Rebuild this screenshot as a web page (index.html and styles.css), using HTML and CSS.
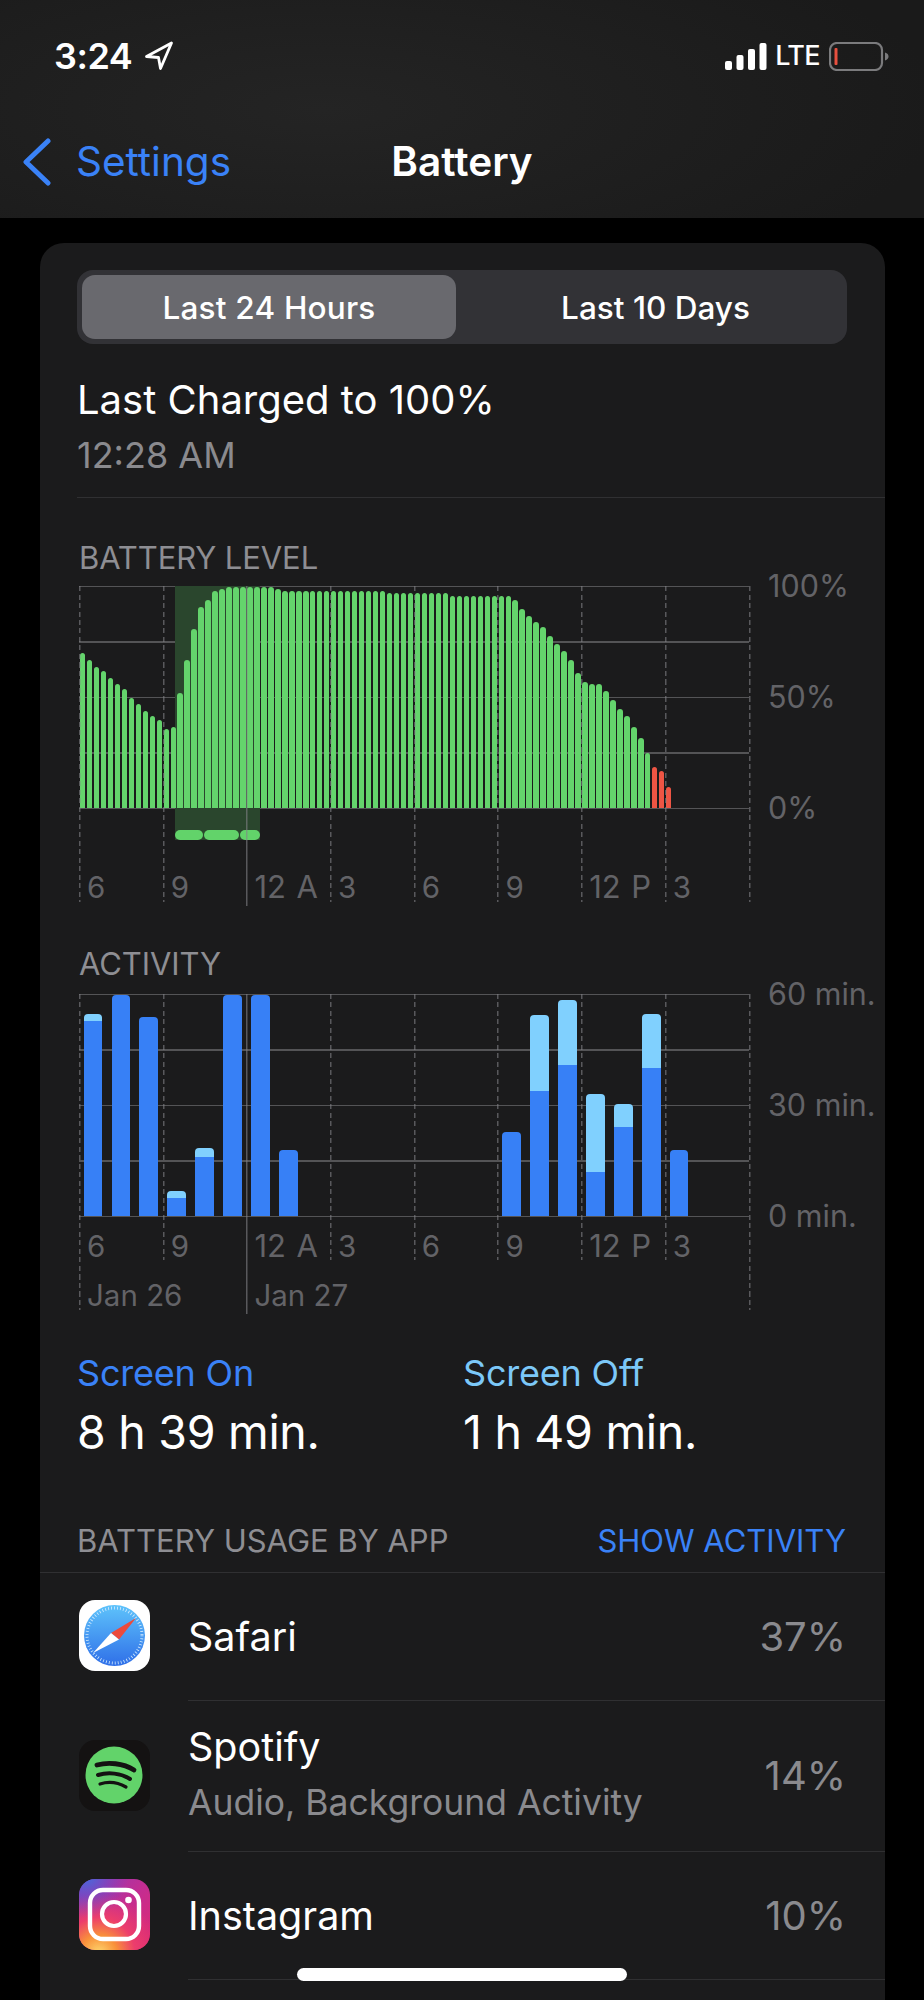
FILE: index.html
```html
<!DOCTYPE html>
<html lang="en">
<head>
<meta charset="utf-8">
<title>Battery</title>
<link rel="stylesheet" href="styles.css">
</head>
<body>
<div class="page">
  <header class="topbar">
    <div class="status">
      <div class="status-left">
        <span class="clock">3:24</span>
        <svg class="loc" viewBox="0 0 30 30" width="30" height="30"><path d="M27.500 2 2.500 15.500 14.500 16.500 16.500 27.500Z" fill="none" stroke="#fff" stroke-width="2.800" stroke-linejoin="round"/></svg>
      </div>
      <div class="status-right">
        <svg class="signal" viewBox="0 0 42 27" width="42" height="27"><rect x="0" y="18" width="7" height="9" rx="2" fill="#fff"/><rect x="11.500" y="12" width="7" height="15" rx="2" fill="#fff"/><rect x="23" y="6" width="7" height="21" rx="2" fill="#fff"/><rect x="34.500" y="0" width="7" height="27" rx="2" fill="#fff"/></svg>
        <span class="lte">LTE</span>
        <svg class="batt" viewBox="0 0 60 29" width="60" height="29"><rect x="1" y="1" width="52" height="27" rx="7" fill="none" stroke="#7b7b7d" stroke-width="2.200"/><rect x="5.500" y="6" width="3" height="17" rx="1" fill="#e8503f"/><path d="M56 10.500c2.500.8 3.500 2.200 3.500 4s-1 3.200-3.500 4Z" fill="#7b7b7d"/></svg>
      </div>
    </div>
    <nav class="navbar">
      <div class="back">
        <svg class="chevron" viewBox="0 0 30 48" width="30" height="48"><path d="M26 3 4 24 26 45" fill="none" stroke="#3a82f7" stroke-width="5" stroke-linecap="round" stroke-linejoin="round"/></svg>
        <span class="back-label">Settings</span>
      </div>
      <h1 class="title">Battery</h1>
    </nav>
  </header>

  <main class="card">
    <div class="segmented">
      <div class="seg seg-on">Last 24 Hours</div>
      <div class="seg seg-off">Last 10 Days</div>
    </div>

    <div class="charged">Last Charged to 100%</div>
    <div class="charged-time">12:28 AM</div>
    <div class="rule"></div>

    <div class="chart-title">BATTERY LEVEL</div>
    <div class="chart">
      <div class="plot">
        <div class="band">
          <div class="pills"><span class="pill p1"></span><span class="pill p2"></span><span class="pill p3"></span></div>
        </div>
        <div class="bars level">
          <i style="height:154.7px"></i><i style="height:148px"></i><i style="height:141.3px"></i><i style="height:137px"></i><i style="height:130.3px"></i><i style="height:123.7px"></i><i style="height:119px"></i><i style="height:110.3px"></i><i style="height:103.7px"></i><i style="height:97px"></i><i style="height:92.3px"></i><i style="height:88px"></i><i style="height:79px"></i><i style="height:81.3px"></i><i style="height:114.7px"></i><i style="height:148px"></i><i style="height:179px"></i><i style="height:201.3px"></i><i style="height:208px"></i><i style="height:216.7px"></i><i style="height:219px"></i>
          <i style="height:221.3px"></i><i style="height:221.3px"></i><i style="height:221.3px"></i><i style="height:221.3px"></i><i style="height:221.3px"></i><i style="height:221.3px"></i><i style="height:221.3px"></i><i style="height:219px"></i>
          <i style="height:216.7px"></i><i style="height:216.7px"></i><i style="height:216.7px"></i><i style="height:216.7px"></i><i style="height:216.7px"></i><i style="height:216.7px"></i><i style="height:216.7px"></i><i style="height:216.7px"></i><i style="height:216.7px"></i><i style="height:216.7px"></i><i style="height:216.7px"></i><i style="height:216.7px"></i><i style="height:216.7px"></i><i style="height:216.7px"></i><i style="height:216.7px"></i>
          <i style="height:214.7px"></i><i style="height:214.7px"></i><i style="height:214.7px"></i><i style="height:214.7px"></i><i style="height:214.7px"></i><i style="height:214.7px"></i><i style="height:214.7px"></i><i style="height:214.7px"></i><i style="height:214.7px"></i>
          <i style="height:212.3px"></i><i style="height:212.3px"></i><i style="height:212.3px"></i><i style="height:212.3px"></i><i style="height:212.3px"></i><i style="height:212.3px"></i><i style="height:212.3px"></i><i style="height:212.3px"></i><i style="height:212.3px"></i>
          <i style="height:208px"></i><i style="height:199px"></i><i style="height:192.3px"></i><i style="height:185.7px"></i><i style="height:181.3px"></i><i style="height:172.3px"></i><i style="height:163.7px"></i><i style="height:157px"></i><i style="height:148px"></i><i style="height:134.7px"></i><i style="height:125.7px"></i><i style="height:123.7px"></i><i style="height:123.7px"></i><i style="height:117px"></i><i style="height:108px"></i><i style="height:99px"></i><i style="height:92.3px"></i><i style="height:81.3px"></i><i style="height:70.3px"></i><i style="height:54.7px"></i>
          <i class="low" style="height:41.3px"></i><i class="low" style="height:37px"></i><i class="low" style="height:21.3px"></i>
        </div>
        <div class="columns">
          <div class="col edge"><span class="tick">6</span></div>
          <div class="col"><span class="tick">9</span></div>
          <div class="col solid"><span class="tick noon">12 A</span></div>
          <div class="col"><span class="tick">3</span></div>
          <div class="col"><span class="tick">6</span></div>
          <div class="col"><span class="tick">9</span></div>
          <div class="col"><span class="tick noon">12 P</span></div>
          <div class="col"><span class="tick">3</span></div>
          <div class="col edge end"></div>
        </div>
      </div>
      <div class="yaxis"><span>100%</span><span>50%</span><span>0%</span></div>
    </div>

    <div class="chart-title second">ACTIVITY</div>
    <div class="chart activity-chart">
      <div class="plot">
        <div class="bars activity">
          <div class="stack"><b class="off" style="height:6.7px"></b><b class="on" style="height:195px"></b></div>
          <div class="stack"><b class="on" style="height:221.3px"></b></div>
          <div class="stack"><b class="on" style="height:199px"></b></div>
          <div class="stack"><b class="off" style="height:7.3px"></b><b class="on" style="height:18px"></b></div>
          <div class="stack"><b class="off" style="height:9.3px"></b><b class="on" style="height:58.7px"></b></div>
          <div class="stack"><b class="on" style="height:221.3px"></b></div>
          <div class="stack"><b class="on" style="height:221.3px"></b></div>
          <div class="stack"><b class="on" style="height:66.3px"></b></div>
          <div></div><div></div><div></div><div></div><div></div><div></div><div></div>
          <div class="stack"><b class="on" style="height:84.3px"></b></div>
          <div class="stack"><b class="off" style="height:75.3px"></b><b class="on" style="height:125.3px"></b></div>
          <div class="stack"><b class="off" style="height:65.7px"></b><b class="on" style="height:150.7px"></b></div>
          <div class="stack"><b class="off" style="height:78px"></b><b class="on" style="height:44px"></b></div>
          <div class="stack"><b class="off" style="height:23.7px"></b><b class="on" style="height:88.7px"></b></div>
          <div class="stack"><b class="off" style="height:54px"></b><b class="on" style="height:147.7px"></b></div>
          <div class="stack"><b class="on" style="height:66.3px"></b></div>
          <div></div><div></div>
        </div>
        <div class="columns">
          <div class="col edge"><span class="tick">6</span><span class="tick date">Jan 26</span></div>
          <div class="col"><span class="tick">9</span></div>
          <div class="col solid"><span class="tick noon">12 A</span><span class="tick date">Jan 27</span></div>
          <div class="col"><span class="tick">3</span></div>
          <div class="col"><span class="tick">6</span></div>
          <div class="col"><span class="tick">9</span></div>
          <div class="col"><span class="tick noon">12 P</span></div>
          <div class="col"><span class="tick">3</span></div>
          <div class="col edge end"></div>
        </div>
      </div>
      <div class="yaxis"><span>60 min.</span><span>30 min.</span><span>0 min.</span></div>
    </div>

    <div class="stats">
      <div class="stat">
        <div class="stat-label on-text">Screen On</div>
        <div class="stat-value">8 h 39 min.</div>
      </div>
      <div class="stat">
        <div class="stat-label off-text">Screen Off</div>
        <div class="stat-value">1 h 49 min.</div>
      </div>
    </div>

    <div class="usage-head">
      <span>BATTERY USAGE BY APP</span>
      <span class="show">SHOW ACTIVITY</span>
    </div>

    <ul class="apps">
      <li class="app">
        <svg class="app-icon" viewBox="0 0 71 71" width="71" height="71">
          <defs><linearGradient id="sf" x1="0" y1="0" x2="0" y2="1"><stop offset="0" stop-color="#5ec3fb"/><stop offset="1" stop-color="#2f6fe8"/></linearGradient></defs>
          <rect width="71" height="71" rx="16" fill="#fff"/>
          <circle cx="35.500" cy="35.500" r="30.500" fill="url(#sf)"/>
          <circle cx="35.500" cy="35.500" r="27.500" fill="none" stroke="#d4ecff" stroke-width="3" stroke-dasharray="0.8 2.200"/>
          <path d="M57 18 32 33 40 39.500Z" fill="#ec4a3c"/>
          <path d="M14 53 32 33 40 39.500Z" fill="#fff"/>
        </svg>
        <div class="app-body"><div class="app-name">Safari</div><div class="app-pct">37%</div></div>
      </li>
      <li class="app tall">
        <svg class="app-icon" viewBox="0 0 71 71" width="71" height="71">
          <rect width="71" height="71" rx="16" fill="#141212"/>
          <circle cx="35" cy="35" r="28.500" fill="#62d36a"/>
          <path d="M18 25C29 22 44 23 55 30" fill="none" stroke="#141212" stroke-width="4.800" stroke-linecap="round"/>
          <path d="M19 35C29 32 42 33 51 39" fill="none" stroke="#141212" stroke-width="4" stroke-linecap="round"/>
          <path d="M21 44C29 41.500 39 42.500 47 47" fill="none" stroke="#141212" stroke-width="3.200" stroke-linecap="round"/>
        </svg>
        <div class="app-body">
          <div class="app-text"><div class="app-name">Spotify</div><div class="app-sub">Audio, Background Activity</div></div>
          <div class="app-pct">14%</div>
        </div>
      </li>
      <li class="app">
        <svg class="app-icon" viewBox="0 0 71 71" width="71" height="71">
          <defs>
            <linearGradient id="ig1" x1="0" y1="0" x2="1" y2="1"><stop offset="0" stop-color="#8a3ab9"/><stop offset=".5" stop-color="#c32d92"/><stop offset="1" stop-color="#e0296f"/></linearGradient>
            <radialGradient id="ig2" cx=".28" cy="1.050" r=".85"><stop offset="0" stop-color="#fdd96f"/><stop offset=".3" stop-color="#f9913a"/><stop offset=".6" stop-color="#ec3d6c"/><stop offset="1" stop-color="#ec3d6c" stop-opacity="0"/></radialGradient>
            <radialGradient id="ig3" cx=".1" cy="-.05" r=".6"><stop offset="0" stop-color="#3f6fe0"/><stop offset="1" stop-color="#7a3fc4" stop-opacity="0"/></radialGradient>
          </defs>
          <rect width="71" height="71" rx="16" fill="url(#ig1)"/>
          <rect width="71" height="71" rx="16" fill="url(#ig2)"/>
          <rect width="71" height="71" rx="16" fill="url(#ig3)"/>
          <rect x="11" y="11" width="49" height="49" rx="13" fill="none" stroke="#fff" stroke-width="4.400"/>
          <circle cx="35" cy="35" r="12" fill="none" stroke="#fff" stroke-width="4.200"/>
          <circle cx="49.500" cy="21" r="3.300" fill="#fff"/>
        </svg>
        <div class="app-body"><div class="app-name">Instagram</div><div class="app-pct">10%</div></div>
      </li>
    </ul>
  </main>

  <div class="home-indicator"></div>
</div>
</body>
</html>
```
FILE: styles.css
```css
* { box-sizing: border-box; }
html, body { margin: 0; padding: 0; background: #000; }
body { font-family: Inter, "Noto Sans", sans-serif; color: #fff; }

.page {
  position: relative;
  width: 924px;
  height: 2000px;
  overflow: hidden;
  display: flex;
  flex-direction: column;
  background: #000;
}

/* top */
.topbar {
  flex: none;
  height: 218px;
  background: radial-gradient(ellipse 620px 200px at 35% 50%, #242424, #1a1a1a);
}
.status {
  height: 114px;
  padding: 36px 35px 0 54px;
  display: flex;
  justify-content: space-between;
  align-items: flex-start;
}
.status-left, .status-right { display: flex; align-items: center; height: 40px; }
.clock { font-size: 36px; font-weight: 600; line-height: 40px; letter-spacing: -.5px; }
.loc { margin-left: 12px; }
.lte { font-size: 27px; font-weight: 500; line-height: 40px; margin: 0 9px 0 8px; letter-spacing: -.6px; }
.navbar {
  height: 104px;
  display: flex;
  align-items: center;
  padding: 0 0 8px 22px;
  position: relative;
}
.back { display: flex; align-items: center; gap: 24px; }
.chevron { display: block; }
.back-label { font-size: 40.500px; line-height: 48px; color: #3a82f7; }
.title {
  position: absolute;
  left: 0;
  right: 0;
  top: 24px;
  margin: 0;
  text-align: center;
  font-size: 40.500px;
  font-weight: 600;
  line-height: 48px;
}

/* card */
.card {
  flex: 1;
  margin: 25px 39px 0 40px;
  padding-top: 27px;
  background: #1b1b1c;
  border-radius: 24px 24px 0 0;
}
.segmented {
  margin: 0 38px 0 37px;
  height: 74px;
  padding: 5px;
  display: flex;
  background: #323236;
  border-radius: 16px;
}
.seg {
  flex: 1;
  display: flex;
  align-items: center;
  justify-content: center;
  font-size: 31.500px;
  font-weight: 500;
  letter-spacing: .2px;
  border-radius: 13px;
}
.seg-on { flex: none; width: 374px; background: #69696e; }
.seg-off { padding-left: 13px; letter-spacing: 0; }
.charged { margin: 32px 0 0 37px; font-size: 40px; line-height: 48px; }
.charged-time { margin: 7px 0 0 37px; font-size: 36px; line-height: 48px; color: #8a8a8e; }
.rule { margin: 18px 0 0 37px; height: 1px; background: #303032; }

.chart-title {
  margin: 43px 0 0 39px;
  font-size: 31px;
  line-height: 34px;
  letter-spacing: -.1px;
  color: #8e8e93;
}
.chart-title.second { margin-top: 41px; }

.chart { display: flex; margin: 11px 0 0 39px; }
.activity-chart { margin-top: 13px; }
.plot {
  position: relative;
  flex: none;
  width: 670px;
  height: 320px;
  background: repeating-linear-gradient(to bottom, #545456 0 1.5px, transparent 1.5px 55.5px) 0 0 / 100% 223.500px no-repeat;
}
.band {
  position: absolute;
  top: 0;
  left: 96px;
  width: 85px;
  height: 254px;
  background: #2a462d;
  display: flex;
  align-items: flex-end;
}
.pills { display: flex; gap: 1px; width: 100%; }
.pill { height: 10px; border-radius: 5px; background: #62d36a; }
.p1 { width: 28px; }
.p2 { width: 35px; }
.p3 { width: 20px; }

.bars {
  position: relative;
  height: 222px;
  display: grid;
  align-items: end;
}
.level { grid-template-columns: repeat(96, 1fr); }
.level i {
  display: block;
  justify-self: center;
  width: 5.400px;
  background: #64d46c;
  border-radius: 3px 3px 0 0;
}
.level i.low { background: #ee5544; }
.activity { grid-template-columns: repeat(24, 1fr); }
.stack {
  justify-self: center;
  width: 18.600px;
  display: flex;
  flex-direction: column;
  border-radius: 4px 4px 0 0;
  overflow: hidden;
}
.stack b { display: block; }
.on { background: #3780f6; }
.off { background: #80d0fe; }

.columns {
  position: absolute;
  inset: 0;
  display: grid;
  grid-template-columns: repeat(8, 83.700px) 2px;
  align-items: start;
}
.col {
  height: 316px;
  padding: 286px 0 0 8px;
  display: flex;
  flex-direction: column;
  background: repeating-linear-gradient(to bottom, rgba(130,130,135,.6) 0 5px, transparent 5px 8.500px) 0 0 / 1.500px 100% no-repeat;
}
.col.solid {
  height: 320px;
  background: linear-gradient(rgba(130,130,135,.6), rgba(130,130,135,.6)) 0 0 / 1.500px 100% no-repeat;
}
.tick {
  display: block;
  font-size: 29.500px;
  line-height: 30px;
  color: #636367;
  white-space: nowrap;
}
.tick.noon { font-size: 31px; word-spacing: 2px; }
.activity-chart .col { height: 266px; padding-top: 237px; }
.activity-chart .col.edge { height: 316px; }
.activity-chart .col.solid { height: 320px; }
.date { margin-top: 19px; }

.yaxis {
  margin: -15px 0 0 19px;
  height: 252px;
  display: flex;
  flex-direction: column;
  justify-content: space-between;
  font-size: 30.500px;
  line-height: 30px;
  color: #636367;
  white-space: nowrap;
}

.stats { display: flex; margin: 37px 0 0 37px; }
.stat { width: 386px; }
.stat-label { font-size: 36px; line-height: 44px; letter-spacing: -.2px; }
.on-text { color: #3a82f7; }
.off-text { color: #7cc8f8; }
.stat-value { margin-top: 11px; font-size: 46.500px; line-height: 52px; letter-spacing: -.3px; }

.usage-head {
  margin: 66px 39px 0 37px;
  display: flex;
  justify-content: space-between;
  font-size: 31px;
  line-height: 34px;
  color: #8e8e93;
}
.show { color: #3a82f7; }

.apps {
  list-style: none;
  margin: 14px 0 0;
  padding: 0;
  border-top: 1px solid #303032;
}
.app {
  display: flex;
  align-items: center;
  height: 128px;
  padding-left: 39px;
}
.app.tall { height: 151px; }
.app-icon { flex: none; display: block; margin-bottom: 3px; }
.app-body {
  flex: 1;
  align-self: stretch;
  margin-left: 38px;
  padding-right: 39px;
  display: flex;
  align-items: center;
  justify-content: space-between;
  border-bottom: 1px solid #303032;
}
.app-text { padding-bottom: 5px; }
.app-name { font-size: 39.500px; line-height: 48px; }
.app-sub { margin-top: 10px; font-size: 35.500px; line-height: 44px; color: #8a8a8e; }
.app-pct { font-size: 40px; line-height: 48px; color: #8a8a8e; }

.home-indicator {
  position: absolute;
  left: 297px;
  bottom: 19px;
  width: 330px;
  height: 13px;
  border-radius: 7px;
  background: #fff;
}
```
